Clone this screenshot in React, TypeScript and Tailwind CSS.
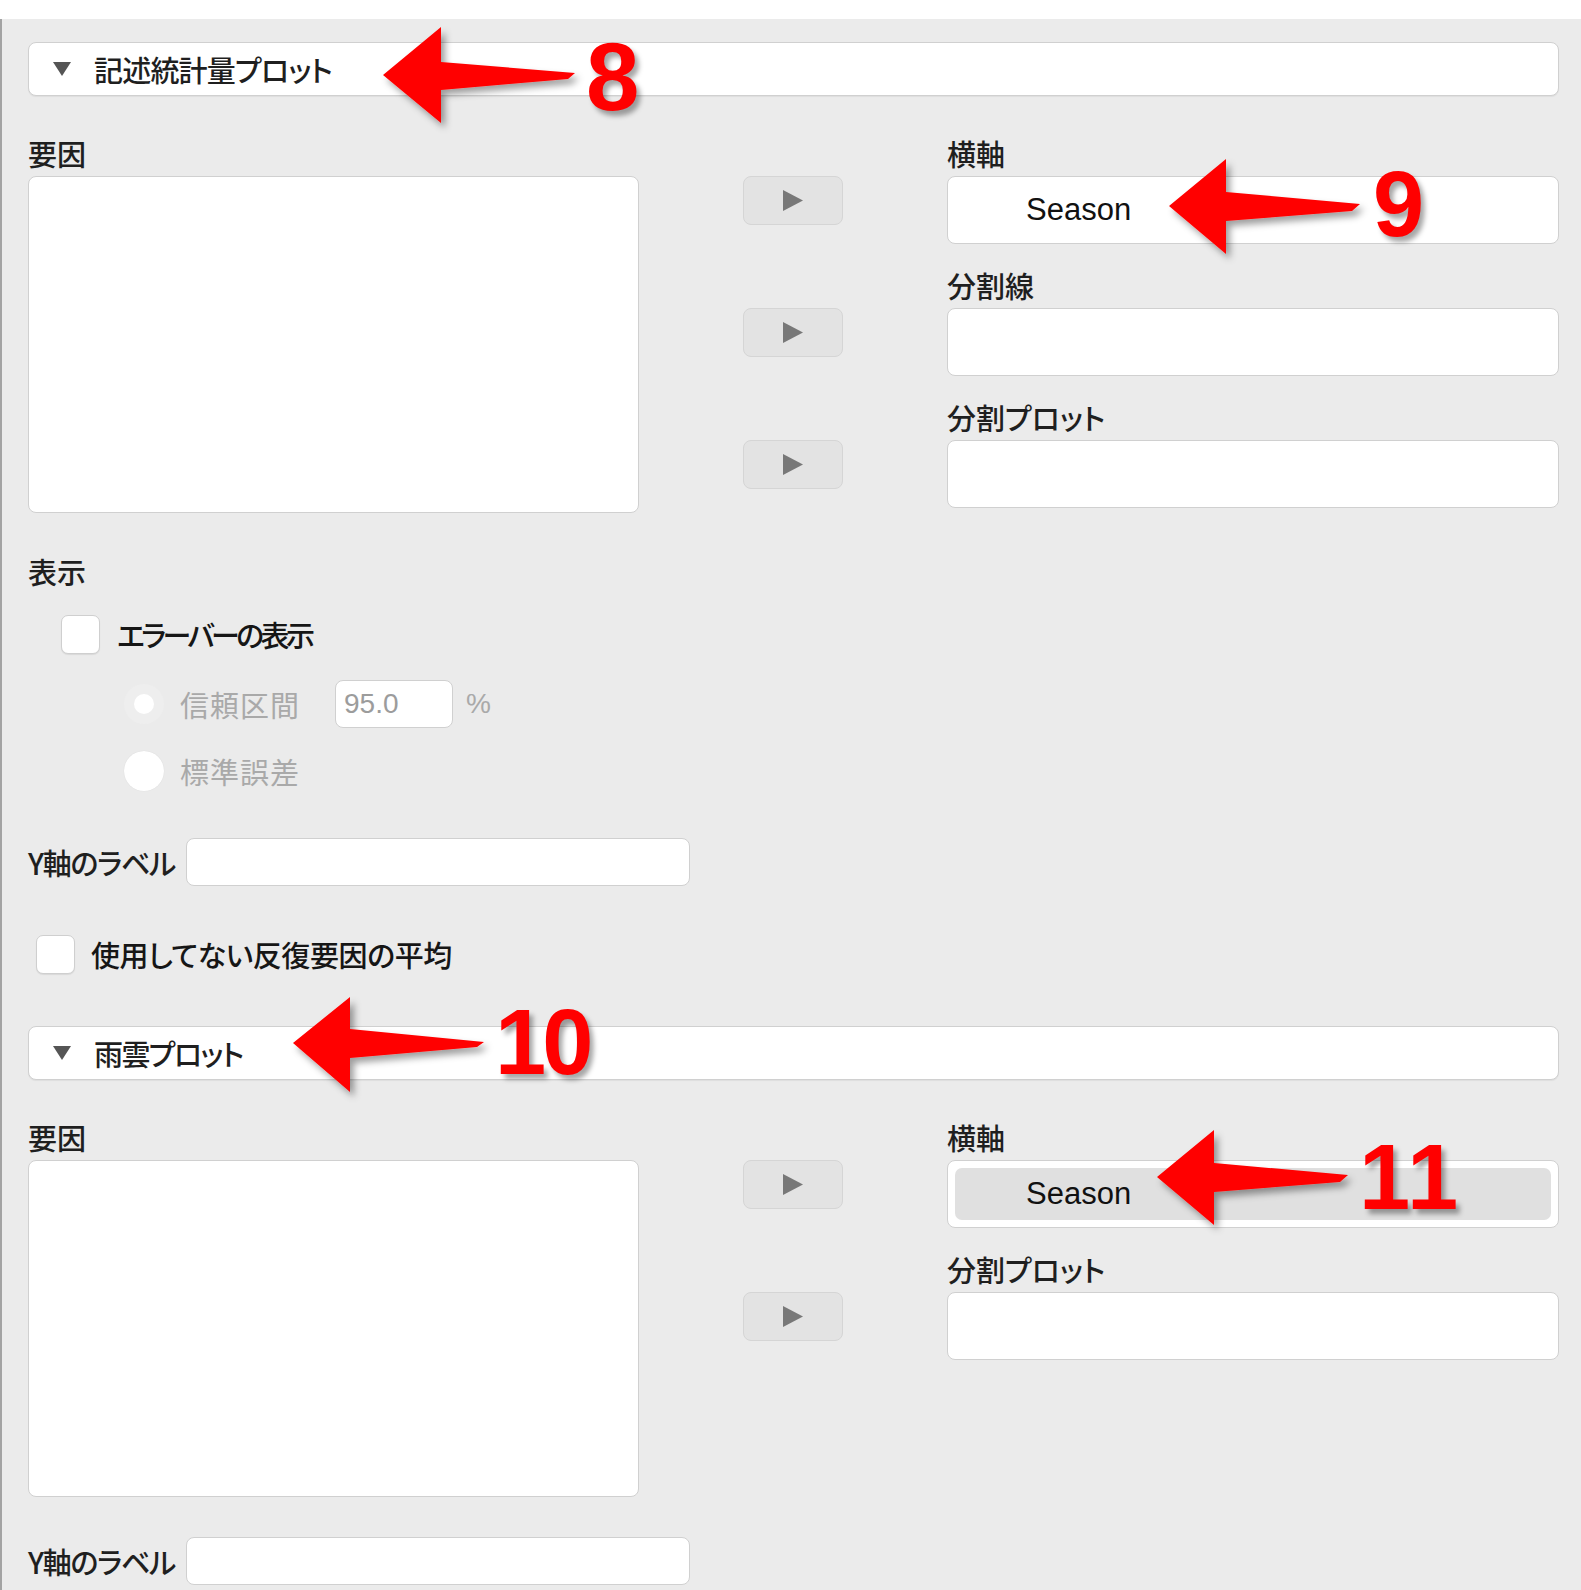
import React from "react";

const jp = "font-['Noto_Sans_CJK_JP',sans-serif] [font-feature-settings:'palt']";
const latin = "font-['Liberation_Sans',sans-serif]";

type Target = { label: string; value?: string; pill?: boolean };

function Header({ title, tight }: { title: string; tight: string }) {
  return (
    <div className="flex h-[54px] items-center rounded-[8px] border border-[#d0d0d0] bg-white pl-[24px] shadow-[0_1px_1px_rgba(0,0,0,0.06)]">
      <svg width="18" height="14" viewBox="0 0 18 14">
        <polygon points="0,0 18,0 9,14" fill="#555" />
      </svg>
      <span className={`ml-[23px] text-[29px] font-medium leading-none text-[#1f1f1f] ${tight}`}>{title}</span>
    </div>
  );
}

function Label({ children }: { children: React.ReactNode }) {
  return <div className="mb-[6px] h-[34px] text-[29px] font-medium leading-[34px] text-[#1f1f1f]">{children}</div>;
}

function MoveBtn() {
  return (
    <div className="flex h-[49px] w-[100px] items-center justify-center rounded-[8px] border border-[#d5d5d5] bg-[#e3e3e3]">
      <svg width="20" height="21" viewBox="0 0 20 21">
        <polygon points="0,0 20,10.5 0,21" fill="#787878" />
      </svg>
    </div>
  );
}

function Assign({ targets }: { targets: Target[] }) {
  return (
    <div className="mt-[40px] grid grid-cols-[611px_1fr_612px]">
      {/* available variables */}
      <div>
        <Label>要因</Label>
        <div className="h-[337px] rounded-[8px] border border-[#d0d0d0] bg-white" />
      </div>

      <div className="flex flex-col items-center gap-[83px] pt-[40px]">
        {targets.map((t) => (
          <MoveBtn key={t.label} />
        ))}
      </div>

      <div className="flex flex-col gap-[24px]">
        {targets.map((t) => (
          <div key={t.label}>
            <Label>{t.label}</Label>
            <div className="h-[68px] rounded-[8px] border border-[#d0d0d0] bg-white p-[7px]">
              {t.value &&
                (t.pill ? (
                  <div className={`flex h-full items-center rounded-[7px] bg-[#e0e0e0] pl-[71px] text-[31px] text-[#111] ${latin}`}>
                    {t.value}
                  </div>
                ) : (
                  <div className={`flex h-full items-center pl-[71px] text-[31px] text-[#111] ${latin}`}>{t.value}</div>
                ))}
            </div>
          </div>
        ))}
      </div>
    </div>
  );
}

function Checkbox() {
  return <div className="h-[39px] w-[39px] rounded-[7px] border border-[#cfcfcf] bg-white shadow-[0_1px_1px_rgba(0,0,0,0.08)]" />;
}

function YLabel() {
  return (
    <div className="flex items-center">
      <span className="w-[158px] text-[29px] font-medium leading-none tracking-[-1.3px] text-[#1f1f1f]">Y軸のラベル</span>
      <div className="h-[48px] w-[504px] rounded-[8px] border border-[#d0d0d0] bg-white" />
    </div>
  );
}

function Arrows() {
  return (
    <svg className="pointer-events-none absolute left-0 top-0" width="1581" height="1590" viewBox="0 0 1581 1590">
      <defs>
        <filter id="sh" x="-20%" y="-20%" width="140%" height="150%">
          <feDropShadow dx="4" dy="5" stdDeviation="3.5" floodColor="#000" floodOpacity="0.38" />
        </filter>
      </defs>
      <g fill="#ff0000" filter="url(#sh)">
        <polygon points="383,75 441,27 441,62 575,73 568,79 441,90 441,123" />
        <polygon points="1169,206 1226,159 1226,192 1360,204 1352,211 1226,221 1226,254" />
        <polygon points="293,1043 350,997 350,1029 484,1042 477,1047 350,1058 350,1092" />
        <polygon points="1157,1177 1214,1130 1214,1163 1348,1175 1340,1182 1214,1192 1214,1225" />
      </g>
    </svg>
  );
}

function Num({ n, className }: { n: string; className: string }) {
  return (
    <div
      className={`absolute font-bold leading-none text-[#ff0000] [text-shadow:4px_5px_5px_rgba(0,0,0,0.35)] ${latin} ${className}`}
    >
      {n}
    </div>
  );
}

export default function App() {
  return (
    <div className={`relative min-h-[1590px] w-full overflow-hidden bg-white pt-[19px] ${jp}`}>
      <div className="border-l-2 border-[#a3a3a3] bg-[#ebebeb] pb-[6px] pl-[26px] pr-[22px] pt-[23px]">
        <Header title="記述統計量プロット" tight="tracking-[-0.8px]" />
        <Assign
          targets={[
            { label: "横軸", value: "Season" },
            { label: "分割線" },
            { label: "分割プロット" },
          ]}
        />

        {/* display options */}
        <div className="mt-[41px] h-[34px] text-[29px] font-medium leading-[34px] text-[#1f1f1f]">表示</div>
        <div className="mt-[27px] flex items-center pl-[33px]">
          <Checkbox />
          <span className="ml-[17px] text-[29px] font-medium leading-none tracking-[-3.6px] text-[#161616]">エラーバーの表示</span>
        </div>
        <div className="mt-[26px] flex h-[48px] items-center pl-[96px]">
          <div className="flex h-[40px] w-[40px] items-center justify-center rounded-full bg-[#eeeeee]">
            <div className="h-[20px] w-[20px] rounded-full bg-white" />
          </div>
          <span className="ml-[16px] w-[155px] text-[29px] leading-none tracking-[1px] text-[#a9a9a9]">信頼区間</span>
          <div className={`flex h-[48px] w-[118px] items-center rounded-[8px] border border-[#d0d0d0] bg-white pl-[8px] text-[28px] text-[#9c9c9c] ${latin}`}>
            95.0
          </div>
          <span className={`ml-[13px] text-[28px] text-[#a9a9a9] ${latin}`}>%</span>
        </div>
        <div className="mt-[23px] flex h-[40px] items-center pl-[96px]">
          <div className="h-[40px] w-[40px] rounded-full bg-white shadow-[0_0_1px_rgba(0,0,0,0.12)]" />
          <span className="ml-[16px] text-[29px] leading-none tracking-[1px] text-[#a9a9a9]">標準誤差</span>
        </div>

        <div className="mt-[47px]">
          <YLabel />
        </div>

        <div className="mt-[49px] flex items-center pl-[8px]">
          <Checkbox />
          <span className="ml-[16px] text-[29px] font-medium leading-none tracking-[-0.4px] text-[#161616]">使用してない反復要因の平均</span>
        </div>

        <div className="mt-[52px]">
          <Header title="雨雲プロット" tight="tracking-[-1.6px]" />
        </div>
        <Assign
          targets={[
            { label: "横軸", value: "Season", pill: true },
            { label: "分割プロット" },
          ]}
        />
        <div className="mt-[40px]">
          <YLabel />
        </div>
      </div>

      {/* annotations */}
      <Arrows />
      <Num n="8" className="left-[586px] top-[29px] text-[96px]" />
      <Num n="9" className="left-[1373px] top-[158px] text-[92px]" />
      <Num n="10" className="left-[495px] top-[996px] text-[92px] tracking-[-4px]" />
      <Num n="11" className="left-[1359px] top-[1131px] text-[92px] tracking-[2px]" />
    </div>
  );
}
